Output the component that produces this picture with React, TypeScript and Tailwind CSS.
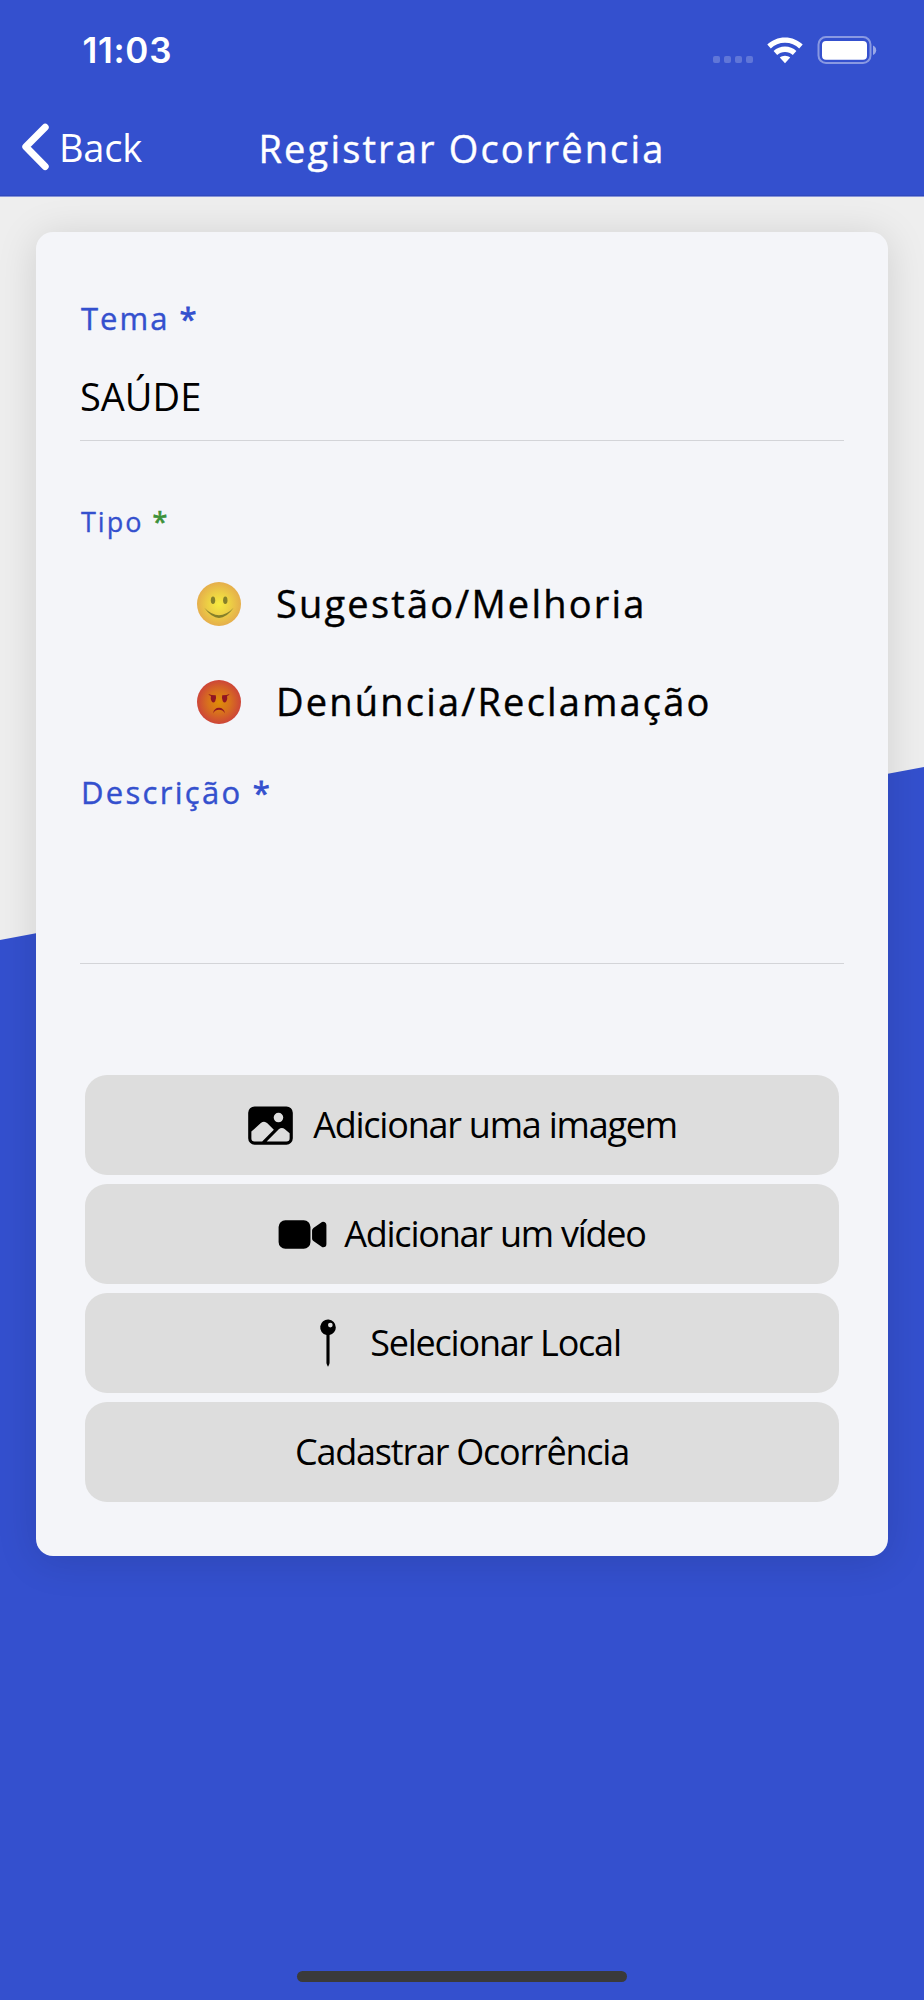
import type { ReactNode } from "react";
import { IoImage, IoPin, IoVideocam } from "react-icons/io5";

function StatusBar() {
  return (
    <div className="flex h-[100px] items-center justify-between pr-[47px] pl-[82.5px]">
      <span className="pt-px font-['Inter',sans-serif] text-[35px] leading-none font-semibold tracking-[0.7px]">
        11:03
      </span>
      <div className="flex h-7 items-center gap-[14px]">
        <div className="flex gap-[3.5px] self-end pb-[1px]">
          {[0, 1, 2, 3].map((dot) => (
            <span key={dot} className="size-[7.5px] rounded-[2px] bg-white/22" />
          ))}
        </div>
        <svg width="36" height="27" viewBox="0 0 36 27" fill="currentColor">
          <path d="M18 0.5C24.9 0.5 31.2 3.2 35.7 7.6L32.2 11.4C28.5 7.8 23.5 5.8 18 5.8S7.5 7.8 3.8 11.4L0.3 7.6C4.8 3.2 11.1 0.5 18 0.5Z" />
          <path d="M18 9.6C22.4 9.6 26.4 11.3 29.4 14.1L25.8 18C23.7 16.1 21 14.9 18 14.9S12.3 16.1 10.2 18L6.6 14.1C9.6 11.3 13.6 9.6 18 9.6Z" />
          <path d="M18 18.7C20 18.7 21.8 19.4 23.2 20.6L18 26.3L12.8 20.6C14.2 19.4 16 18.7 18 18.7Z" />
        </svg>
        <svg width="60" height="28" viewBox="0 0 60 28">
          <rect x="1.5" y="1" width="52" height="26" rx="7.5" fill="none" stroke="white" strokeOpacity="0.42" strokeWidth="2" />
          <rect x="5" y="5" width="45" height="18.8" rx="4" fill="white" />
          <path d="M56 9.5C57.8 10.1 59.2 12 59.2 14.2S57.8 18.3 56 18.9Z" fill="white" fillOpacity="0.5" />
        </svg>
      </div>
    </div>
  );
}

function Header() {
  return (
    <header className="relative z-10 h-[196px] border-b border-[#3049bd] bg-[#3450ce] text-white shadow-[0_1px_0_#8492d8]">
      <StatusBar />
      <div className="grid h-24 grid-cols-[1fr_auto_1fr] items-center">
        <button className="flex items-center pl-5 text-left">
          <svg width="32" height="50" viewBox="0 0 32 50" className="mr-[7px]">
            <path
              d="M25.2 4.2L5.8 23.8L25.2 43.5"
              fill="none"
              stroke="currentColor"
              strokeWidth="7"
              strokeLinecap="round"
              strokeLinejoin="round"
            />
          </svg>
          <span className="pb-0.5 text-[38px] leading-none tracking-[-0.2px]">Back</span>
        </button>
        <h1 className="text-[38px] leading-none tracking-[2.15px] [-webkit-text-stroke:0.4px]">
          Registrar Ocorrência
        </h1>
      </div>
    </header>
  );
}

function HappyFace() {
  return (
    <svg width="44" height="44" viewBox="0 0 44 44">
      <defs>
        <radialGradient id="happy">
          <stop offset="0" stopColor="#f6eb40" />
          <stop offset="0.5" stopColor="#edd044" />
          <stop offset="1" stopColor="#e5ae4c" />
        </radialGradient>
      </defs>
      <circle cx="22" cy="22" r="22" fill="url(#happy)" />
      <g fill="#85802a">
        <ellipse cx="16" cy="18.3" rx="2.2" ry="3.8" />
        <ellipse cx="28.3" cy="18.3" rx="2.2" ry="3.8" />
        <path d="M7.3 25.7Q22 46.2 36.7 25.7Q22 40.6 7.3 25.7Z" />
      </g>
    </svg>
  );
}

function AngryFace() {
  return (
    <svg width="44" height="44" viewBox="0 0 44 44">
      <defs>
        <radialGradient id="angry">
          <stop offset="0" stopColor="#df8f06" />
          <stop offset="0.5" stopColor="#d8711d" />
          <stop offset="1" stopColor="#cd4538" />
        </radialGradient>
      </defs>
      <circle cx="22" cy="22" r="22" fill="url(#angry)" />
      <g fill="#901522">
        <path d="M11.3 13.9Q14.5 15.4 18.8 15.3Q19.6 18.6 18.2 21.2Q16.4 23.6 14.6 21.2Q13.3 18.6 13.9 15.9Q12.2 15.3 11.3 13.9Z" />
        <path d="M32.7 13.9Q29.5 15.4 25.2 15.3Q24.4 18.6 25.8 21.2Q27.6 23.6 29.4 21.2Q30.7 18.6 30.1 15.9Q31.8 15.3 32.7 13.9Z" />
        <path d="M16 33.2Q17.2 27.7 22 27.7T28 33.2Q25.8 29.8 22 29.8T16 33.2Z" />
      </g>
    </svg>
  );
}

function TypeOption({ icon, label }: { icon: ReactNode; label: string }) {
  return (
    <div className="flex h-[98px] items-center gap-[35px] pl-[117px]">
      {icon}
      <span className="pb-0.5 text-[38px] leading-none tracking-[2.2px] [-webkit-text-stroke:0.4px]">{label}</span>
    </div>
  );
}

function FormButton({ icon, label }: { icon?: ReactNode; label: string }) {
  return (
    <button className="flex h-[100px] items-center justify-center gap-[17px] rounded-[22px] bg-[#dddddd] text-[36px] leading-none tracking-[-1.23px]">
      {icon}
      <span>{label}</span>
    </button>
  );
}

export default function App() {
  return (
    <div className="relative flex h-[2000px] w-[924px] flex-col overflow-hidden bg-[#eeeeee] font-['Open_Sans',sans-serif] text-black">
      {/* slanted blue backdrop behind the card */}
      <div className="absolute inset-0 bg-[#3450ce] [clip-path:polygon(0_940px,100%_767px,100%_100%,0_100%)]" />

      <Header />

      <main className="relative mx-9 mt-9 rounded-[17px] bg-[#f4f5f9] px-11 pt-[66px] pb-[53.5px] shadow-[0_4px_40px_rgba(0,0,0,0.13)]">
        <label className="flex h-[41px] items-center pl-px text-[31px] leading-none tracking-[2px] whitespace-pre text-[#3450ce] [-webkit-text-stroke:0.4px]">
          Tema <span className="[-webkit-text-stroke:0.8px]">*</span>
        </label>
        <div className="mt-3.5 flex h-[88px] items-center border-b border-[#d3d4d8] pb-0.5 text-[38px] leading-none">
          SAÚDE
        </div>

        <p className="mt-[62px] flex h-9 items-center pl-px text-[27px] leading-none tracking-[2px] whitespace-pre text-[#3450ce] [-webkit-text-stroke:0.3px]">
          Tipo <span className="text-[#3c9139] [-webkit-text-stroke:0.7px]">*</span>
        </p>
        <div className="mt-4">
          <TypeOption icon={<HappyFace />} label="Sugestão/Melhoria" />
          <TypeOption icon={<AngryFace />} label="Denúncia/Reclamação" />
        </div>

        <label className="mt-[21px] flex h-10 items-center pl-px text-[31px] leading-none tracking-[2.3px] whitespace-pre text-[#3450ce] [-webkit-text-stroke:0.4px]">
          Descrição <span className="[-webkit-text-stroke:0.8px]">*</span>
        </label>
        <div className="h-[152px] border-b border-[#d3d4d8]" />

        <div className="mx-[5px] mt-[111px] flex flex-col gap-[9px]">
          <FormButton icon={<IoImage className="-ml-0.5 size-[51px]" />} label="Adicionar uma imagem" />
          <FormButton icon={<IoVideocam className="-mr-px -ml-px size-[51px]" />} label="Adicionar um vídeo" />
          <FormButton icon={<IoPin className="size-[50px]" />} label="Selecionar Local" />
          <FormButton label="Cadastrar Ocorrência" />
        </div>
      </main>

      <div className="relative mx-auto mt-auto mb-[18px] h-[11px] w-[330px] rounded-full bg-[#3a3a3a]" />
    </div>
  );
}
